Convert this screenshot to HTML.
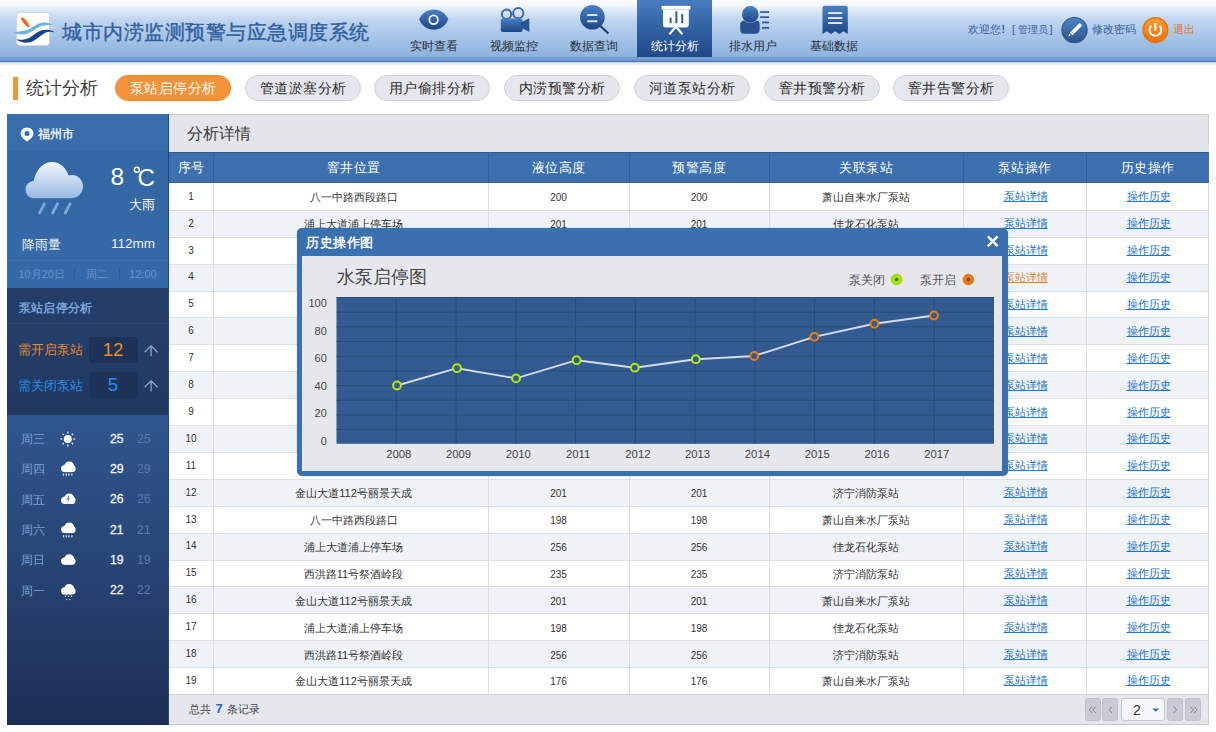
<!DOCTYPE html><html><head><meta charset="utf-8"><style>
*{box-sizing:border-box;margin:0;padding:0}
html,body{width:1216px;height:732px;overflow:hidden;background:#fff;font-family:"Liberation Sans",sans-serif;color:#333}
.a{position:absolute;white-space:nowrap}
.nt{position:absolute;top:39px;font-size:12px;line-height:14px;color:#2b303b;white-space:nowrap;text-align:center;width:80px}
.tab{position:absolute;top:75px;width:116px;height:26px;border-radius:13px;background:#e6e7ec;border:1px solid #cfd1d7;
 font-size:14px;line-height:25.5px;letter-spacing:0.4px;text-indent:0.4px;text-align:center;color:#2c2c2c;white-space:nowrap}
.tab.on{background:#f6923a;border-color:#f08b32;color:#fff}
.td{position:absolute;height:26px;line-height:26px;font-size:11px;color:#333;text-align:center;white-space:nowrap}
.num{font-size:10px}
.lk{color:#1b74d2;text-decoration:underline}
.or{color:#ea8430}
.pb{position:absolute;top:698px;width:16px;height:23px;border-radius:3px;background:#c9ccd6;border:1px solid #bdc1ca}
</style></head><body>
<div class="a" style="left:0;top:0;width:1216px;height:57px;background:linear-gradient(to bottom,#fbfcfe 0px,#f3f7fc 5px,#d6e4f4 12px,#c0d6ef 20px,#adc9ea 32px,#9dbee4 44px,#8db2df 57px)"></div>
<div class="a" style="left:0;top:57px;width:1216px;height:1px;background:#7499c7"></div>
<div class="a" style="left:0;top:58px;width:1216px;height:3px;background:linear-gradient(#76a8e1,#5b93d6)"></div>
<div class="a" style="left:0;top:61px;width:1216px;height:1px;background:#4877b2"></div>
<div class="a" style="left:0;top:62px;width:1216px;height:4px;background:linear-gradient(#cdd2d9,#e9ebee 50%,#fff)"></div>
<div class="a" style="left:637px;top:0;width:75px;height:57px;background:linear-gradient(#477cbf,#3162a2 50%,#22488a)"></div>
<div class="a" style="left:16px;top:12px;width:34px;height:34px;border-radius:4px;background:#fff;border:1px solid #cdd6e3"></div>
<svg class="a" style="left:0;top:0" width="60" height="60" viewBox="0 0 60 60">
 <ellipse cx="25.3" cy="22.3" rx="1.8" ry="6.3" transform="rotate(-40 25.3 22.3)" fill="#f0641a"/>
 <path d="M13.3 32.4 C 18 31.6, 24 31.2, 28 29.6 C 33 27.6, 37 23.2, 43 22.6 C 47 22.2, 50 23.2, 53.2 25 C 50 24.6, 47 25.4, 43 25.6 C 38 26.2, 33 32, 27 33.8 C 22 35.2, 17 34, 13.3 32.4 Z" fill="#6cb2e2"/>
 <path d="M16.3 39.5 C 21 39.8, 26 39.8, 30 37.4 C 35 34.4, 38 30.6, 44 30 C 48 29.4, 52 30.2, 55.1 32.4 C 52 31.6, 48 31.6, 45 33 C 40 35.4, 36 40.8, 30 42.2 C 25 43.4, 20 42, 16.3 39.5 Z" fill="#173f8c"/>
</svg>
<div class="a" style="left:62px;top:19.5px;font-size:20.3px;line-height:24px;letter-spacing:0.5px;color:#2f5e9e;-webkit-text-stroke:0.35px #2f5e9e">城市内涝监测预警与应急调度系统</div>
<div class="nt" style="left:394px;color:#2b303b">实时查看</div>
<div class="nt" style="left:474px;color:#2b303b">视频监控</div>
<div class="nt" style="left:554px;color:#2b303b">数据查询</div>
<div class="nt" style="left:634.5px;color:#fff">统计分析</div>
<div class="nt" style="left:713px;color:#2b303b">排水用户</div>
<div class="nt" style="left:793.5px;color:#2b303b">基础数据</div>
<svg class="a" style="left:0;top:0" width="1216" height="57" viewBox="0 0 1216 57">
 <defs>
  <linearGradient id="ng" x1="0" y1="0" x2="0" y2="1"><stop offset="0" stop-color="#4a80c2"/><stop offset="1" stop-color="#1c4685"/></linearGradient>
  <linearGradient id="pg" x1="0" y1="0" x2="0" y2="1"><stop offset="0" stop-color="#5085c6"/><stop offset="1" stop-color="#2a528c"/></linearGradient>
  <linearGradient id="og" x1="0" y1="0" x2="0" y2="1"><stop offset="0" stop-color="#ffa030"/><stop offset="1" stop-color="#ea6f0c"/></linearGradient>
 </defs>
 <path d="M419.2 19.6 C 424 6.2, 443.4 6.2, 448.2 19.6 C 443.4 33, 424 33, 419.2 19.6 Z" fill="url(#ng)"/>
 <circle cx="433.6" cy="19.7" r="4.3" fill="none" stroke="#eef3fa" stroke-width="1.9"/>
 <circle cx="506.6" cy="14.2" r="4.7" fill="none" stroke="#3a6aaa" stroke-width="2"/>
 <circle cx="518.3" cy="13.2" r="5.1" fill="none" stroke="#3a6aaa" stroke-width="2"/>
 <rect x="500.8" y="18.6" width="21.8" height="13.4" rx="2" fill="url(#ng)"/>
 <path d="M521 22.6 L529.3 18.2 L529.3 32 L521 27.6 Z" fill="#28548f"/>
 <circle cx="592.4" cy="17.3" r="12.3" fill="url(#ng)"/>
 <rect x="587.2" y="14.1" width="10.2" height="1.9" fill="#dfe8f4"/>
 <rect x="587.2" y="20.3" width="10.2" height="1.9" fill="#dfe8f4"/>
 <line x1="600.4" y1="26" x2="608.4" y2="33.4" stroke="#1c3c6c" stroke-width="2.1"/>
 <rect x="661.6" y="5.8" width="28.8" height="3.7" fill="#fff"/>
 <path d="M663 9.4 H688.8 V25 Q688.8 27.4 686.4 27.4 H665.4 Q663 27.4 663 25 Z" fill="#fff"/>
 <rect x="669.6" y="17.6" width="2" height="5.6" fill="#2f5f9f"/>
 <rect x="675.4" y="11.2" width="2" height="12" fill="#2f5f9f"/>
 <rect x="681.2" y="13.9" width="2" height="9.3" fill="#2f5f9f"/>
 <path d="M675.9 26.6 L669.4 34.2 M675.9 26.6 L682.4 34.2" stroke="#fff" stroke-width="2.1" fill="none"/>
 <circle cx="750.3" cy="14.4" r="8.3" fill="url(#ng)"/>
 <path d="M740.2 23.4 Q741.2 21 743.6 20.6 Q750.3 25.2 757 20.6 Q759.4 21 759.6 23.4 V29.4 Q759.6 33.8 755.4 33.8 H744.4 Q740.2 33.8 740.2 29.4 Z" fill="#28528f"/>
 <rect x="760.1" y="11.2" width="9" height="1.7" fill="#2d5a98"/>
 <rect x="760.1" y="16.3" width="9" height="1.7" fill="#2d5a98"/>
 <rect x="762" y="21.6" width="7.1" height="1.7" fill="#2d5a98"/>
 <rect x="762" y="27" width="7.1" height="1.7" fill="#2d5a98"/>
 <path d="M822.5 8 Q822.5 5.8 824.7 5.8 H845.6 Q847.8 5.8 847.8 8 V34 L843.6 31.2 L839.4 34 L835.2 31.2 L831 34 L826.8 31.2 L822.5 34 Z" fill="url(#ng)"/>
 <rect x="828.1" y="12.1" width="14.2" height="1.9" fill="#e3eaf5"/>
 <rect x="828.1" y="17.1" width="14.2" height="1.9" fill="#e3eaf5"/>
 <rect x="828.1" y="22.1" width="14.2" height="1.9" fill="#e3eaf5"/>
 <circle cx="1074.5" cy="30.1" r="12.6" fill="url(#pg)" stroke="#2f5a96" stroke-width="1.2"/>
 <path d="M1068.4 36.2 L1069.2 33.4 L1071 35.2 Z" fill="#fff"/><path d="M1069.9 32.6 L1079.6 23 L1082.2 25.6 L1072.5 35.2 Z" fill="#fff"/><line x1="1071.2" y1="31.4" x2="1073.8" y2="34" stroke="#3b69a8" stroke-width="0.7"/>
 <circle cx="1155.4" cy="30.1" r="12.4" fill="url(#og)" stroke="#e57410" stroke-width="1.4"/>
 <path d="M1151.2 25.8 A5.9 5.9 0 1 0 1159.6 25.8" fill="none" stroke="#fff" stroke-width="2"/>
 <line x1="1155.3" y1="23.2" x2="1155.3" y2="30.6" stroke="#fff" stroke-width="2"/>
</svg>
<div class="a" style="left:968px;top:23px;font-size:11px;line-height:13px;color:#3460a0">欢迎您</div>
<div class="a" style="left:1001.5px;top:23px;font-size:11px;line-height:13px;color:#3460a0;font-weight:bold">!</div>
<div class="a" style="left:1012px;top:23px;font-size:11px;line-height:13px;color:#3460a0">[</div>
<div class="a" style="left:1017.5px;top:23px;font-size:10.4px;line-height:13px;color:#3460a0">管理员</div>
<div class="a" style="left:1049.5px;top:23px;font-size:11px;line-height:13px;color:#3460a0">]</div>
<div class="a" style="left:1092px;top:23px;font-size:11px;line-height:13px;color:#3460a0;letter-spacing:0.1px">修改密码</div>
<div class="a" style="left:1172.5px;top:23px;font-size:11px;line-height:13px;color:#e8772a">退出</div>
<div class="a" style="left:13px;top:77px;width:5px;height:23px;background:#f39535"></div>
<div class="a" style="left:26px;top:77px;font-size:18.3px;line-height:22px;color:#3e3e3e">统计分析</div>
<div class="tab on" style="left:115px">泵站启停分析</div>
<div class="tab" style="left:245px">管道淤塞分析</div>
<div class="tab" style="left:374px">用户偷排分析</div>
<div class="tab" style="left:504px">内涝预警分析</div>
<div class="tab" style="left:634px">河道泵站分析</div>
<div class="tab" style="left:764px">窨井预警分析</div>
<div class="tab" style="left:893px">窨井告警分析</div>
<div class="a" style="left:7px;top:114px;width:161px;height:611px;background:#1f3360"></div>
<div class="a" style="left:7px;top:114px;width:161px;height:37px;background:#3a6dab"></div>
<svg class="a" style="left:20px;top:127px" width="14" height="15" viewBox="0 0 14 15">
 <path d="M7 0.4 C3.3 0.4 0.6 3.2 0.6 6.6 C0.6 10 4.4 12.9 7 14.6 C9.6 12.9 13.4 10 13.4 6.6 C13.4 3.2 10.7 0.4 7 0.4 Z" fill="#fff"/>
 <circle cx="7" cy="6.5" r="2.5" fill="#3a6dab"/></svg>
<div class="a" style="left:38px;top:127px;font-size:12.3px;line-height:14px;color:#fff;-webkit-text-stroke:0.25px #fff">福州市</div>
<div class="a" style="left:7px;top:151px;width:161px;height:74px;background:#3368a5"></div>
<svg class="a" style="left:25px;top:161px" width="60" height="55" viewBox="0 0 60 55">
 <defs><linearGradient id="cg" x1="0" y1="0" x2="0" y2="1"><stop offset="0" stop-color="#f3f7fc"/><stop offset="1" stop-color="#98b8e2"/></linearGradient></defs>
 <path d="M8.5 37.2 C3.6 37.2 0.6 33.2 0.6 28.6 C0.6 23.6 4.4 20 8.8 20 C10 11.4 16.6 1 26.6 1 C35.4 1 41.6 7.4 43.6 14.6 C44.6 14.2 45.8 14 47 14 C53.6 14 58 19.4 58 25.6 C58 32 53.2 37.2 47 37.2 Z" fill="url(#cg)"/>
 <path d="M19.4 42.8 L14.6 52 M32.4 42.8 L27.6 52 M45 42.8 L40.2 52" stroke="#7ea6da" stroke-width="2.8" stroke-linecap="round"/>
</svg>
<div class="a" style="left:110.5px;top:162.5px;font-size:24.5px;line-height:28px;color:#fff">8</div>
<div class="a" style="left:137.6px;top:163.5px;font-size:24px;line-height:28px;color:#fff">C</div>
<svg class="a" style="left:130px;top:163px" width="12" height="12" viewBox="130 163 12 12"><circle cx="136.8" cy="169.8" r="2.5" fill="none" stroke="#fff" stroke-width="1.4"/></svg>
<div class="a" style="left:129px;top:198px;font-size:12.5px;line-height:14px;color:#fff">大雨</div>
<div class="a" style="left:7px;top:225px;width:161px;height:35px;background:#3569a7"></div>
<div class="a" style="left:7px;top:260px;width:161px;height:1px;background:#3f70ad"></div>
<div class="a" style="left:22px;top:238px;font-size:12.6px;line-height:14px;color:#eef2f8">降雨量</div>
<div class="a" style="left:111px;top:237px;font-size:13.5px;line-height:14px;color:#eef2f8">112mm</div>
<div class="a" style="left:7px;top:261px;width:161px;height:27px;background:#3569a7"></div>
<div class="a" style="left:18.5px;top:267.3px;font-size:11px;line-height:14px;color:#6b93c7">10月20日</div>
<div class="a" style="left:74px;top:268px;width:1px;height:11px;background:#2d5a94"></div>
<div class="a" style="left:85.5px;top:267.3px;font-size:11px;line-height:14px;color:#6b93c7">周二</div>
<div class="a" style="left:119px;top:268px;width:1px;height:11px;background:#2d5a94"></div>
<div class="a" style="left:129px;top:267.3px;font-size:11.1px;line-height:14px;color:#6b93c7">12:00</div>
<div class="a" style="left:7px;top:288px;width:161px;height:35px;background:#233f69"></div>
<div class="a" style="left:7px;top:323px;width:161px;height:1px;background:#2e4d7b"></div>
<div class="a" style="left:18.5px;top:300.8px;font-size:12px;letter-spacing:0.4px;line-height:14px;font-weight:bold;color:#7aa2d8">泵站启停分析</div>
<div class="a" style="left:7px;top:324px;width:161px;height:91px;background:linear-gradient(#243f69,#21395f)"></div>
<div class="a" style="left:18px;top:343px;font-size:12.8px;line-height:14px;color:#e9882c">需开启泵站</div>
<div class="a" style="left:88.5px;top:337px;width:49px;height:26px;border-radius:4px;background:#1c3357"></div>
<div class="a" style="left:88.5px;top:339px;width:49px;font-size:18.5px;line-height:22px;color:#f08a2a;text-align:center">12</div>
<div class="a" style="left:18px;top:378.5px;font-size:12.8px;line-height:14px;color:#2a8ce9">需关闭泵站</div>
<div class="a" style="left:88.5px;top:372px;width:49px;height:26px;border-radius:4px;background:#1c3357"></div>
<div class="a" style="left:88.5px;top:374px;width:49px;font-size:18.5px;line-height:22px;color:#2092f2;text-align:center">5</div>
<svg class="a" style="left:0;top:0" width="170" height="732" viewBox="0 0 170 732">
 <path d="M151.1 345.8 L151.1 356.2 M144.6 352.2 L151.1 345.8 L157.6 352.2" stroke="#8aa6d2" stroke-width="1.3" fill="none"/>
 <path d="M151.1 380.8 L151.1 391.2 M144.6 387.2 L151.1 380.8 L157.6 387.2" stroke="#8aa6d2" stroke-width="1.3" fill="none"/>
</svg>
<div class="a" style="left:7px;top:415px;width:161px;height:310px;background:linear-gradient(#30568f,#284676 45%,#1c2e55)"></div>
<div class="a" style="left:21px;top:432.0px;font-size:11.5px;line-height:14px;color:#7aa1d5">周三</div>
<div class="a" style="left:110px;top:431.8px;font-size:12.2px;line-height:14px;color:#f0f4fa;-webkit-text-stroke:0.3px #f0f4fa">25</div>
<div class="a" style="left:137px;top:431.8px;font-size:12.2px;line-height:14px;color:#5a7aab">25</div>
<div class="a" style="left:21px;top:462.3px;font-size:11.5px;line-height:14px;color:#7aa1d5">周四</div>
<div class="a" style="left:110px;top:462.1px;font-size:12.2px;line-height:14px;color:#f0f4fa;-webkit-text-stroke:0.3px #f0f4fa">29</div>
<div class="a" style="left:137px;top:462.1px;font-size:12.2px;line-height:14px;color:#5a7aab">29</div>
<div class="a" style="left:21px;top:492.6px;font-size:11.5px;line-height:14px;color:#7aa1d5">周五</div>
<div class="a" style="left:110px;top:492.4px;font-size:12.2px;line-height:14px;color:#f0f4fa;-webkit-text-stroke:0.3px #f0f4fa">26</div>
<div class="a" style="left:137px;top:492.4px;font-size:12.2px;line-height:14px;color:#5a7aab">26</div>
<div class="a" style="left:21px;top:522.9px;font-size:11.5px;line-height:14px;color:#7aa1d5">周六</div>
<div class="a" style="left:110px;top:522.7px;font-size:12.2px;line-height:14px;color:#f0f4fa;-webkit-text-stroke:0.3px #f0f4fa">21</div>
<div class="a" style="left:137px;top:522.7px;font-size:12.2px;line-height:14px;color:#5a7aab">21</div>
<div class="a" style="left:21px;top:553.2px;font-size:11.5px;line-height:14px;color:#7aa1d5">周日</div>
<div class="a" style="left:110px;top:553.0px;font-size:12.2px;line-height:14px;color:#f0f4fa;-webkit-text-stroke:0.3px #f0f4fa">19</div>
<div class="a" style="left:137px;top:553.0px;font-size:12.2px;line-height:14px;color:#5a7aab">19</div>
<div class="a" style="left:21px;top:583.5px;font-size:11.5px;line-height:14px;color:#7aa1d5">周一</div>
<div class="a" style="left:110px;top:583.3px;font-size:12.2px;line-height:14px;color:#f0f4fa;-webkit-text-stroke:0.3px #f0f4fa">22</div>
<div class="a" style="left:137px;top:583.3px;font-size:12.2px;line-height:14px;color:#5a7aab">22</div>
<svg class="a" style="left:0;top:0" width="170" height="732" viewBox="0 0 170 732"><circle cx="67.8" cy="439.0" r="4" fill="#fff"/><line x1="73.40" y1="439.00" x2="75.20" y2="439.00" stroke="#e8eef8" stroke-width="1.3"/><line x1="71.76" y1="442.96" x2="73.03" y2="444.23" stroke="#e8eef8" stroke-width="1.3"/><line x1="67.80" y1="444.60" x2="67.80" y2="446.40" stroke="#e8eef8" stroke-width="1.3"/><line x1="63.84" y1="442.96" x2="62.57" y2="444.23" stroke="#e8eef8" stroke-width="1.3"/><line x1="62.20" y1="439.00" x2="60.40" y2="439.00" stroke="#e8eef8" stroke-width="1.3"/><line x1="63.84" y1="435.04" x2="62.57" y2="433.77" stroke="#e8eef8" stroke-width="1.3"/><line x1="67.80" y1="433.40" x2="67.80" y2="431.60" stroke="#e8eef8" stroke-width="1.3"/><line x1="71.76" y1="435.04" x2="73.03" y2="433.77" stroke="#e8eef8" stroke-width="1.3"/><circle cx="64.7" cy="468.5" r="3.6" fill="#fff"/><circle cx="69.2" cy="466.7" r="5.1" fill="#fff"/><circle cx="72.2" cy="468.7" r="3.4" fill="#fff"/><rect x="64.7" y="468.5" width="7.5" height="3.6" fill="#fff"/><rect x="62.9" y="473.5" width="1.2" height="2.2" fill="#dfe7f3"/><rect x="65.6" y="473.5" width="1.2" height="2.2" fill="#dfe7f3"/><rect x="68.3" y="473.5" width="1.2" height="2.2" fill="#dfe7f3"/><rect x="71.3" y="473.5" width="1.2" height="2.2" fill="#dfe7f3"/><circle cx="64.7" cy="500.3" r="3.6" fill="#fff"/><circle cx="69.2" cy="498.5" r="5.1" fill="#fff"/><circle cx="72.2" cy="500.5" r="3.4" fill="#fff"/><rect x="64.7" y="500.3" width="7.5" height="3.6" fill="#fff"/><path d="M68.6 496.2 L66.6 499.6 L68.4 499.6 L67.2 502.6 L69.8 498.6 L68.0 498.6 L69.4 496.2 Z" fill="#30558e"/><circle cx="64.7" cy="529.5" r="3.6" fill="#fff"/><circle cx="69.2" cy="527.7" r="5.1" fill="#fff"/><circle cx="72.2" cy="529.7" r="3.4" fill="#fff"/><rect x="64.7" y="529.5" width="7.5" height="3.6" fill="#fff"/><rect x="62.9" y="535.2" width="1.2" height="2.2" fill="#dfe7f3"/><rect x="65.6" y="535.2" width="1.2" height="2.2" fill="#dfe7f3"/><rect x="68.3" y="535.2" width="1.2" height="2.2" fill="#dfe7f3"/><rect x="71.3" y="535.2" width="1.2" height="2.2" fill="#dfe7f3"/><circle cx="64.7" cy="561.1" r="3.6" fill="#fff"/><circle cx="69.2" cy="559.3" r="5.1" fill="#fff"/><circle cx="72.2" cy="561.3" r="3.4" fill="#fff"/><rect x="64.7" y="561.1" width="7.5" height="3.6" fill="#fff"/><circle cx="64.7" cy="590.9" r="3.6" fill="#fff"/><circle cx="69.2" cy="589.1" r="5.1" fill="#fff"/><circle cx="72.2" cy="591.1" r="3.4" fill="#fff"/><rect x="64.7" y="590.9" width="7.5" height="3.6" fill="#fff"/><circle cx="65.4" cy="596.3" r="0.7" fill="#dfe7f3"/><circle cx="68.5" cy="596.3" r="0.7" fill="#dfe7f3"/><circle cx="71.5" cy="596.3" r="0.7" fill="#dfe7f3"/><circle cx="66.8" cy="599.6" r="0.7" fill="#dfe7f3"/><circle cx="69.9" cy="599.6" r="0.7" fill="#dfe7f3"/></svg>
<div class="a" style="left:168px;top:114px;width:1px;height:611px;background:#25497c"></div>
<div class="a" style="left:169px;top:114px;width:1040px;height:39px;background:#e4e5ea;border-top:1px solid #c9cacf;border-right:1px solid #c9ccd2"></div>
<div class="a" style="left:169px;top:145px;width:1040px;height:7px;background:#e2e5ea"></div>
<div class="a" style="left:186.5px;top:122.6px;font-size:16.2px;line-height:20px;color:#3a3a3a">分析详情</div>
<div class="a" style="left:169px;top:152px;width:1040px;height:1px;background:#2d5a90"></div>
<div class="a" style="left:169px;top:153px;width:1040px;height:29px;background:#3c70ae"></div>
<div class="a" style="left:169px;top:182px;width:1040px;height:1px;background:#3a6190"></div>
<div class="a" style="left:169px;top:159.5px;width:44px;text-align:center;font-size:13px;letter-spacing:0.6px;text-indent:0.6px;line-height:16px;color:#fff">序号</div>
<div class="a" style="left:216px;top:159.5px;width:275px;text-align:center;font-size:13px;letter-spacing:0.6px;text-indent:0.6px;line-height:16px;color:#fff">窨井位置</div>
<div class="a" style="left:213px;top:152px;width:1px;height:31px;background:#33619b"></div>
<div class="a" style="left:488px;top:159.5px;width:141px;text-align:center;font-size:13px;letter-spacing:0.6px;text-indent:0.6px;line-height:16px;color:#fff">液位高度</div>
<div class="a" style="left:488px;top:152px;width:1px;height:31px;background:#33619b"></div>
<div class="a" style="left:629px;top:159.5px;width:140px;text-align:center;font-size:13px;letter-spacing:0.6px;text-indent:0.6px;line-height:16px;color:#fff">预警高度</div>
<div class="a" style="left:629px;top:152px;width:1px;height:31px;background:#33619b"></div>
<div class="a" style="left:769px;top:159.5px;width:194px;text-align:center;font-size:13px;letter-spacing:0.6px;text-indent:0.6px;line-height:16px;color:#fff">关联泵站</div>
<div class="a" style="left:769px;top:152px;width:1px;height:31px;background:#33619b"></div>
<div class="a" style="left:963px;top:159.5px;width:123px;text-align:center;font-size:13px;letter-spacing:0.6px;text-indent:0.6px;line-height:16px;color:#fff">泵站操作</div>
<div class="a" style="left:963px;top:152px;width:1px;height:31px;background:#33619b"></div>
<div class="a" style="left:1086px;top:159.5px;width:123px;text-align:center;font-size:13px;letter-spacing:0.6px;text-indent:0.6px;line-height:16px;color:#fff">历史操作</div>
<div class="a" style="left:1086px;top:152px;width:1px;height:31px;background:#33619b"></div>
<div class="a" style="left:169px;top:184.000px;width:1040px;height:26.894px;background:#fff;border-bottom:1px solid #dcdfe4;border-right:1px solid #d4d6db"></div>
<div class="td" style="left:169px;width:44px;top:183.80px;font-size:10px">1</div>
<div class="td" style="left:216px;width:275px;top:184.40px">八一中路西段路口</div>
<div class="td" style="left:488px;width:141px;top:185.30px;font-size:10px">200</div>
<div class="td" style="left:629px;width:140px;top:185.30px;font-size:10px">200</div>
<div class="td" style="left:769px;width:194px;top:184.40px">萧山自来水厂泵站</div>
<div class="td lk" style="left:964px;width:123px;top:183.40px">泵站详情</div>
<div class="td lk" style="left:1087px;width:123px;top:183.40px">操作历史</div>
<div class="a" style="left:169px;top:210.894px;width:1040px;height:26.894px;background:#eff2f6;border-bottom:1px solid #dcdfe4;border-right:1px solid #d4d6db"></div>
<div class="td" style="left:169px;width:44px;top:210.69px;font-size:10px">2</div>
<div class="td" style="left:216px;width:275px;top:211.29px">浦上大道浦上停车场</div>
<div class="td" style="left:488px;width:141px;top:212.19px;font-size:10px">201</div>
<div class="td" style="left:629px;width:140px;top:212.19px;font-size:10px">201</div>
<div class="td" style="left:769px;width:194px;top:211.29px">佳龙石化泵站</div>
<div class="td lk" style="left:964px;width:123px;top:210.29px">泵站详情</div>
<div class="td lk" style="left:1087px;width:123px;top:210.29px">操作历史</div>
<div class="a" style="left:169px;top:237.788px;width:1040px;height:26.894px;background:#fff;border-bottom:1px solid #dcdfe4;border-right:1px solid #d4d6db"></div>
<div class="td" style="left:169px;width:44px;top:237.59px;font-size:10px">3</div>
<div class="td" style="left:488px;width:141px;top:239.09px;font-size:10px">235</div>
<div class="td" style="left:629px;width:140px;top:239.09px;font-size:10px">235</div>
<div class="td" style="left:769px;width:194px;top:238.19px">济宁消防泵站</div>
<div class="td lk" style="left:964px;width:123px;top:237.19px">泵站详情</div>
<div class="td lk" style="left:1087px;width:123px;top:237.19px">操作历史</div>
<div class="a" style="left:169px;top:264.682px;width:1040px;height:26.894px;background:#eff2f6;border-bottom:1px solid #dcdfe4;border-right:1px solid #d4d6db"></div>
<div class="td" style="left:169px;width:44px;top:264.48px;font-size:10px">4</div>
<div class="td" style="left:488px;width:141px;top:265.98px;font-size:10px">201</div>
<div class="td" style="left:629px;width:140px;top:265.98px;font-size:10px">201</div>
<div class="td" style="left:769px;width:194px;top:265.08px">萧山自来水厂泵站</div>
<div class="td lk or" style="left:964px;width:123px;top:264.08px">泵站详情</div>
<div class="td lk" style="left:1087px;width:123px;top:264.08px">操作历史</div>
<div class="a" style="left:169px;top:291.576px;width:1040px;height:26.894px;background:#fff;border-bottom:1px solid #dcdfe4;border-right:1px solid #d4d6db"></div>
<div class="td" style="left:169px;width:44px;top:291.38px;font-size:10px">5</div>
<div class="td" style="left:488px;width:141px;top:292.88px;font-size:10px">198</div>
<div class="td" style="left:629px;width:140px;top:292.88px;font-size:10px">198</div>
<div class="td" style="left:769px;width:194px;top:291.98px">佳龙石化泵站</div>
<div class="td lk" style="left:964px;width:123px;top:290.98px">泵站详情</div>
<div class="td lk" style="left:1087px;width:123px;top:290.98px">操作历史</div>
<div class="a" style="left:169px;top:318.470px;width:1040px;height:26.894px;background:#eff2f6;border-bottom:1px solid #dcdfe4;border-right:1px solid #d4d6db"></div>
<div class="td" style="left:169px;width:44px;top:318.27px;font-size:10px">6</div>
<div class="td" style="left:488px;width:141px;top:319.77px;font-size:10px">256</div>
<div class="td" style="left:629px;width:140px;top:319.77px;font-size:10px">256</div>
<div class="td" style="left:769px;width:194px;top:318.87px">济宁消防泵站</div>
<div class="td lk" style="left:964px;width:123px;top:317.87px">泵站详情</div>
<div class="td lk" style="left:1087px;width:123px;top:317.87px">操作历史</div>
<div class="a" style="left:169px;top:345.364px;width:1040px;height:26.894px;background:#fff;border-bottom:1px solid #dcdfe4;border-right:1px solid #d4d6db"></div>
<div class="td" style="left:169px;width:44px;top:345.16px;font-size:10px">7</div>
<div class="td" style="left:488px;width:141px;top:346.66px;font-size:10px">235</div>
<div class="td" style="left:629px;width:140px;top:346.66px;font-size:10px">235</div>
<div class="td" style="left:769px;width:194px;top:345.76px">萧山自来水厂泵站</div>
<div class="td lk" style="left:964px;width:123px;top:344.76px">泵站详情</div>
<div class="td lk" style="left:1087px;width:123px;top:344.76px">操作历史</div>
<div class="a" style="left:169px;top:372.258px;width:1040px;height:26.894px;background:#eff2f6;border-bottom:1px solid #dcdfe4;border-right:1px solid #d4d6db"></div>
<div class="td" style="left:169px;width:44px;top:372.06px;font-size:10px">8</div>
<div class="td" style="left:488px;width:141px;top:373.56px;font-size:10px">201</div>
<div class="td" style="left:629px;width:140px;top:373.56px;font-size:10px">201</div>
<div class="td" style="left:769px;width:194px;top:372.66px">佳龙石化泵站</div>
<div class="td lk" style="left:964px;width:123px;top:371.66px">泵站详情</div>
<div class="td lk" style="left:1087px;width:123px;top:371.66px">操作历史</div>
<div class="a" style="left:169px;top:399.152px;width:1040px;height:26.894px;background:#fff;border-bottom:1px solid #dcdfe4;border-right:1px solid #d4d6db"></div>
<div class="td" style="left:169px;width:44px;top:398.95px;font-size:10px">9</div>
<div class="td" style="left:488px;width:141px;top:400.45px;font-size:10px">198</div>
<div class="td" style="left:629px;width:140px;top:400.45px;font-size:10px">198</div>
<div class="td" style="left:769px;width:194px;top:399.55px">济宁消防泵站</div>
<div class="td lk" style="left:964px;width:123px;top:398.55px">泵站详情</div>
<div class="td lk" style="left:1087px;width:123px;top:398.55px">操作历史</div>
<div class="a" style="left:169px;top:426.046px;width:1040px;height:26.894px;background:#eff2f6;border-bottom:1px solid #dcdfe4;border-right:1px solid #d4d6db"></div>
<div class="td" style="left:169px;width:44px;top:425.85px;font-size:10px">10</div>
<div class="td" style="left:488px;width:141px;top:427.35px;font-size:10px">256</div>
<div class="td" style="left:629px;width:140px;top:427.35px;font-size:10px">256</div>
<div class="td" style="left:769px;width:194px;top:426.45px">萧山自来水厂泵站</div>
<div class="td lk" style="left:964px;width:123px;top:425.45px">泵站详情</div>
<div class="td lk" style="left:1087px;width:123px;top:425.45px">操作历史</div>
<div class="a" style="left:169px;top:452.940px;width:1040px;height:26.894px;background:#fff;border-bottom:1px solid #dcdfe4;border-right:1px solid #d4d6db"></div>
<div class="td" style="left:169px;width:44px;top:452.74px;font-size:10px">11</div>
<div class="td" style="left:488px;width:141px;top:454.24px;font-size:10px">235</div>
<div class="td" style="left:629px;width:140px;top:454.24px;font-size:10px">235</div>
<div class="td" style="left:769px;width:194px;top:453.34px">佳龙石化泵站</div>
<div class="td lk" style="left:964px;width:123px;top:452.34px">泵站详情</div>
<div class="td lk" style="left:1087px;width:123px;top:452.34px">操作历史</div>
<div class="a" style="left:169px;top:479.834px;width:1040px;height:26.894px;background:#eff2f6;border-bottom:1px solid #dcdfe4;border-right:1px solid #d4d6db"></div>
<div class="td" style="left:169px;width:44px;top:479.63px;font-size:10px">12</div>
<div class="td" style="left:216px;width:275px;top:480.23px">金山大道112号丽景天成</div>
<div class="td" style="left:488px;width:141px;top:481.13px;font-size:10px">201</div>
<div class="td" style="left:629px;width:140px;top:481.13px;font-size:10px">201</div>
<div class="td" style="left:769px;width:194px;top:480.23px">济宁消防泵站</div>
<div class="td lk" style="left:964px;width:123px;top:479.23px">泵站详情</div>
<div class="td lk" style="left:1087px;width:123px;top:479.23px">操作历史</div>
<div class="a" style="left:169px;top:506.728px;width:1040px;height:26.894px;background:#fff;border-bottom:1px solid #dcdfe4;border-right:1px solid #d4d6db"></div>
<div class="td" style="left:169px;width:44px;top:506.53px;font-size:10px">13</div>
<div class="td" style="left:216px;width:275px;top:507.13px">八一中路西段路口</div>
<div class="td" style="left:488px;width:141px;top:508.03px;font-size:10px">198</div>
<div class="td" style="left:629px;width:140px;top:508.03px;font-size:10px">198</div>
<div class="td" style="left:769px;width:194px;top:507.13px">萧山自来水厂泵站</div>
<div class="td lk" style="left:964px;width:123px;top:506.13px">泵站详情</div>
<div class="td lk" style="left:1087px;width:123px;top:506.13px">操作历史</div>
<div class="a" style="left:169px;top:533.622px;width:1040px;height:26.894px;background:#eff2f6;border-bottom:1px solid #dcdfe4;border-right:1px solid #d4d6db"></div>
<div class="td" style="left:169px;width:44px;top:533.42px;font-size:10px">14</div>
<div class="td" style="left:216px;width:275px;top:534.02px">浦上大道浦上停车场</div>
<div class="td" style="left:488px;width:141px;top:534.92px;font-size:10px">256</div>
<div class="td" style="left:629px;width:140px;top:534.92px;font-size:10px">256</div>
<div class="td" style="left:769px;width:194px;top:534.02px">佳龙石化泵站</div>
<div class="td lk" style="left:964px;width:123px;top:533.02px">泵站详情</div>
<div class="td lk" style="left:1087px;width:123px;top:533.02px">操作历史</div>
<div class="a" style="left:169px;top:560.516px;width:1040px;height:26.894px;background:#fff;border-bottom:1px solid #dcdfe4;border-right:1px solid #d4d6db"></div>
<div class="td" style="left:169px;width:44px;top:560.32px;font-size:10px">15</div>
<div class="td" style="left:216px;width:275px;top:560.92px">西洪路11号祭酒岭段</div>
<div class="td" style="left:488px;width:141px;top:561.82px;font-size:10px">235</div>
<div class="td" style="left:629px;width:140px;top:561.82px;font-size:10px">235</div>
<div class="td" style="left:769px;width:194px;top:560.92px">济宁消防泵站</div>
<div class="td lk" style="left:964px;width:123px;top:559.92px">泵站详情</div>
<div class="td lk" style="left:1087px;width:123px;top:559.92px">操作历史</div>
<div class="a" style="left:169px;top:587.410px;width:1040px;height:26.894px;background:#eff2f6;border-bottom:1px solid #dcdfe4;border-right:1px solid #d4d6db"></div>
<div class="td" style="left:169px;width:44px;top:587.21px;font-size:10px">16</div>
<div class="td" style="left:216px;width:275px;top:587.81px">金山大道112号丽景天成</div>
<div class="td" style="left:488px;width:141px;top:588.71px;font-size:10px">201</div>
<div class="td" style="left:629px;width:140px;top:588.71px;font-size:10px">201</div>
<div class="td" style="left:769px;width:194px;top:587.81px">萧山自来水厂泵站</div>
<div class="td lk" style="left:964px;width:123px;top:586.81px">泵站详情</div>
<div class="td lk" style="left:1087px;width:123px;top:586.81px">操作历史</div>
<div class="a" style="left:169px;top:614.304px;width:1040px;height:26.894px;background:#fff;border-bottom:1px solid #dcdfe4;border-right:1px solid #d4d6db"></div>
<div class="td" style="left:169px;width:44px;top:614.10px;font-size:10px">17</div>
<div class="td" style="left:216px;width:275px;top:614.70px">浦上大道浦上停车场</div>
<div class="td" style="left:488px;width:141px;top:615.60px;font-size:10px">198</div>
<div class="td" style="left:629px;width:140px;top:615.60px;font-size:10px">198</div>
<div class="td" style="left:769px;width:194px;top:614.70px">佳龙石化泵站</div>
<div class="td lk" style="left:964px;width:123px;top:613.70px">泵站详情</div>
<div class="td lk" style="left:1087px;width:123px;top:613.70px">操作历史</div>
<div class="a" style="left:169px;top:641.198px;width:1040px;height:26.894px;background:#eff2f6;border-bottom:1px solid #dcdfe4;border-right:1px solid #d4d6db"></div>
<div class="td" style="left:169px;width:44px;top:641.00px;font-size:10px">18</div>
<div class="td" style="left:216px;width:275px;top:641.60px">西洪路11号祭酒岭段</div>
<div class="td" style="left:488px;width:141px;top:642.50px;font-size:10px">256</div>
<div class="td" style="left:629px;width:140px;top:642.50px;font-size:10px">256</div>
<div class="td" style="left:769px;width:194px;top:641.60px">济宁消防泵站</div>
<div class="td lk" style="left:964px;width:123px;top:640.60px">泵站详情</div>
<div class="td lk" style="left:1087px;width:123px;top:640.60px">操作历史</div>
<div class="a" style="left:169px;top:668.092px;width:1040px;height:26.894px;background:#fff;border-bottom:1px solid #dcdfe4;border-right:1px solid #d4d6db"></div>
<div class="td" style="left:169px;width:44px;top:667.89px;font-size:10px">19</div>
<div class="td" style="left:216px;width:275px;top:668.49px">金山大道112号丽景天成</div>
<div class="td" style="left:488px;width:141px;top:669.39px;font-size:10px">176</div>
<div class="td" style="left:629px;width:140px;top:669.39px;font-size:10px">176</div>
<div class="td" style="left:769px;width:194px;top:668.49px">萧山自来水厂泵站</div>
<div class="td lk" style="left:964px;width:123px;top:667.49px">泵站详情</div>
<div class="td lk" style="left:1087px;width:123px;top:667.49px">操作历史</div>
<div class="a" style="left:213px;top:183px;width:1px;height:511px;background:#dcdee3"></div>
<div class="a" style="left:488px;top:183px;width:1px;height:511px;background:#dcdee3"></div>
<div class="a" style="left:629px;top:183px;width:1px;height:511px;background:#dcdee3"></div>
<div class="a" style="left:769px;top:183px;width:1px;height:511px;background:#dcdee3"></div>
<div class="a" style="left:963px;top:183px;width:1px;height:511px;background:#dcdee3"></div>
<div class="a" style="left:1086px;top:183px;width:1px;height:511px;background:#dcdee3"></div>
<div class="a" style="left:169px;top:694px;width:1040px;height:31px;background:#e6e7ec;border-top:1px solid #cdd0d6;border-bottom:1px solid #c4c7cd;border-right:1px solid #c9ccd2"></div>
<div class="a" style="left:188.5px;top:702px;font-size:11px;line-height:14px;color:#444">总共</div>
<div class="a" style="left:215.5px;top:701.5px;font-size:13px;line-height:14px;color:#1a70d2;font-weight:bold">7</div>
<div class="a" style="left:227px;top:702px;font-size:11px;line-height:14px;color:#444">条记录</div>
<div class="pb" style="left:1084.7px"></div>
<div class="pb" style="left:1102.4px"></div>
<div class="pb" style="left:1167.2px"></div>
<div class="pb" style="left:1185.1px"></div>
<div class="a" style="left:1120.5px;top:698px;width:44px;height:23px;border-radius:3px;background:#f4f6fa;border:1px solid #c3c7cf"></div>
<div class="a" style="left:1133px;top:702px;font-size:14px;line-height:16px;color:#333">2</div>
<svg class="a" style="left:0;top:0" width="1216" height="732" viewBox="0 0 1216 732">
 <path d="M1092 706.6 L1089.2 709.8 L1092 713 M1095.6 706.6 L1092.8 709.8 L1095.6 713" stroke="#7c818c" stroke-width="1" fill="none"/>
 <path d="M1112 706.6 L1109.2 709.8 L1112 713" stroke="#7c818c" stroke-width="1" fill="none"/>
 <path d="M1173.8 706.6 L1176.6 709.8 L1173.8 713" stroke="#7c818c" stroke-width="1" fill="none"/>
 <path d="M1190.6 706.6 L1193.4 709.8 L1190.6 713 M1194.2 706.6 L1197 709.8 L1194.2 713" stroke="#7c818c" stroke-width="1" fill="none"/>
 <path d="M1152.4 708.4 L1159.2 708.4 L1155.8 711.8 Z" fill="#2e6cbf"/>
</svg>
<div class="a" style="left:297px;top:228px;width:711px;height:248px;background:#3a70b0;border-radius:5px;box-shadow:0 0 2px rgba(0,0,0,.2)"></div>
<div class="a" style="left:302px;top:256px;width:700px;height:215px;background:#e6e7ec"></div>
<div class="a" style="left:306px;top:234.5px;font-size:13px;letter-spacing:0.5px;line-height:16px;color:#fff;-webkit-text-stroke:0.4px #fff">历史操作图</div>
<svg class="a" style="left:0;top:0" width="1216" height="732" viewBox="0 0 1216 732">
 <path d="M987.8 236.4 L997.6 246.2 M997.6 236.4 L987.8 246.2" stroke="#fff" stroke-width="2.4"/>
</svg>
<div class="a" style="left:337px;top:266px;font-size:18px;line-height:22px;color:#444">水泵启停图</div>
<div class="a" style="left:848.5px;top:273px;font-size:12.2px;line-height:14px;color:#505050">泵关闭</div>
<div class="a" style="left:920px;top:273px;font-size:12.2px;line-height:14px;color:#505050">泵开启</div>
<svg class="a" style="left:0;top:0;font-family:'Liberation Sans',sans-serif" width="1216" height="732" viewBox="0 0 1216 732"><circle cx="896.6" cy="279.5" r="5.3" fill="#a9e400" stroke="#8fc800" stroke-width="0.8"/><circle cx="896.6" cy="279.5" r="1.7" fill="#4d7410"/>
<circle cx="968.4" cy="279.5" r="5.3" fill="#f07a0c" stroke="#d86a08" stroke-width="0.8"/><circle cx="968.4" cy="279.5" r="1.7" fill="#7a3c10"/>
<rect x="336.5" y="297" width="657.5" height="146.8" fill="#335b91"/>
<line x1="336.5" y1="297.50" x2="994" y2="297.50" stroke="#2a4a77" stroke-width="1"/>
<line x1="336.5" y1="312.18" x2="994" y2="312.18" stroke="#2a4a77" stroke-width="1"/>
<line x1="336.5" y1="326.86" x2="994" y2="326.86" stroke="#2a4a77" stroke-width="1"/>
<line x1="336.5" y1="341.54" x2="994" y2="341.54" stroke="#2a4a77" stroke-width="1"/>
<line x1="336.5" y1="356.22" x2="994" y2="356.22" stroke="#2a4a77" stroke-width="1"/>
<line x1="336.5" y1="370.90" x2="994" y2="370.90" stroke="#2a4a77" stroke-width="1"/>
<line x1="336.5" y1="385.58" x2="994" y2="385.58" stroke="#2a4a77" stroke-width="1"/>
<line x1="336.5" y1="400.26" x2="994" y2="400.26" stroke="#2a4a77" stroke-width="1"/>
<line x1="336.5" y1="414.94" x2="994" y2="414.94" stroke="#2a4a77" stroke-width="1"/>
<line x1="336.5" y1="429.62" x2="994" y2="429.62" stroke="#2a4a77" stroke-width="1"/>
<line x1="396.27" y1="297" x2="396.27" y2="443.8" stroke="#2a4a77" stroke-width="1"/>
<line x1="456.05" y1="297" x2="456.05" y2="443.8" stroke="#2a4a77" stroke-width="1"/>
<line x1="515.82" y1="297" x2="515.82" y2="443.8" stroke="#2a4a77" stroke-width="1"/>
<line x1="575.59" y1="297" x2="575.59" y2="443.8" stroke="#2a4a77" stroke-width="1"/>
<line x1="635.36" y1="297" x2="635.36" y2="443.8" stroke="#2a4a77" stroke-width="1"/>
<line x1="695.14" y1="297" x2="695.14" y2="443.8" stroke="#2a4a77" stroke-width="1"/>
<line x1="754.91" y1="297" x2="754.91" y2="443.8" stroke="#2a4a77" stroke-width="1"/>
<line x1="814.68" y1="297" x2="814.68" y2="443.8" stroke="#2a4a77" stroke-width="1"/>
<line x1="874.45" y1="297" x2="874.45" y2="443.8" stroke="#2a4a77" stroke-width="1"/>
<line x1="934.23" y1="297" x2="934.23" y2="443.8" stroke="#2a4a77" stroke-width="1"/>
<path d="M397.0,385.5 L457.0,368.2 L516.0,378.4 L576.6,360.2 L634.8,367.7 L695.8,359.2 L754.2,356.0 L814.3,336.8 L874.4,323.7 L934.0,315.5" fill="none" stroke="#d5dcea" stroke-width="1.9"/>
<circle cx="397.0" cy="385.5" r="3.9" fill="#335b91" stroke="#b2ee00" stroke-width="2"/>
<circle cx="457.0" cy="368.2" r="3.9" fill="#335b91" stroke="#b2ee00" stroke-width="2"/>
<circle cx="516.0" cy="378.4" r="3.9" fill="#335b91" stroke="#b2ee00" stroke-width="2"/>
<circle cx="576.6" cy="360.2" r="3.9" fill="#335b91" stroke="#b2ee00" stroke-width="2"/>
<circle cx="634.8" cy="367.7" r="3.9" fill="#335b91" stroke="#b2ee00" stroke-width="2"/>
<circle cx="695.8" cy="359.2" r="3.9" fill="#335b91" stroke="#b2ee00" stroke-width="2"/>
<circle cx="754.2" cy="356.0" r="3.9" fill="#335b91" stroke="#f07d0a" stroke-width="2"/>
<circle cx="814.3" cy="336.8" r="3.9" fill="#335b91" stroke="#f07d0a" stroke-width="2"/>
<circle cx="874.4" cy="323.7" r="3.9" fill="#335b91" stroke="#f07d0a" stroke-width="2"/>
<circle cx="934.0" cy="315.5" r="3.9" fill="#335b91" stroke="#f07d0a" stroke-width="2"/>
<text x="326.8" y="445.1" text-anchor="end" font-size="11" fill="#444">0</text>
<text x="326.8" y="417.4" text-anchor="end" font-size="11" fill="#444">20</text>
<text x="326.8" y="389.8" text-anchor="end" font-size="11" fill="#444">40</text>
<text x="326.8" y="362.1" text-anchor="end" font-size="11" fill="#444">60</text>
<text x="326.8" y="334.5" text-anchor="end" font-size="11" fill="#444">80</text>
<text x="326.8" y="306.8" text-anchor="end" font-size="11" fill="#444">100</text>
<text x="398.8" y="458.2" text-anchor="middle" font-size="11.3" fill="#444">2008</text>
<text x="458.5" y="458.2" text-anchor="middle" font-size="11.3" fill="#444">2009</text>
<text x="518.3" y="458.2" text-anchor="middle" font-size="11.3" fill="#444">2010</text>
<text x="578.1" y="458.2" text-anchor="middle" font-size="11.3" fill="#444">2011</text>
<text x="637.9" y="458.2" text-anchor="middle" font-size="11.3" fill="#444">2012</text>
<text x="697.6" y="458.2" text-anchor="middle" font-size="11.3" fill="#444">2013</text>
<text x="757.4" y="458.2" text-anchor="middle" font-size="11.3" fill="#444">2014</text>
<text x="817.2" y="458.2" text-anchor="middle" font-size="11.3" fill="#444">2015</text>
<text x="877.0" y="458.2" text-anchor="middle" font-size="11.3" fill="#444">2016</text>
<text x="936.7" y="458.2" text-anchor="middle" font-size="11.3" fill="#444">2017</text></svg>
</body></html>
